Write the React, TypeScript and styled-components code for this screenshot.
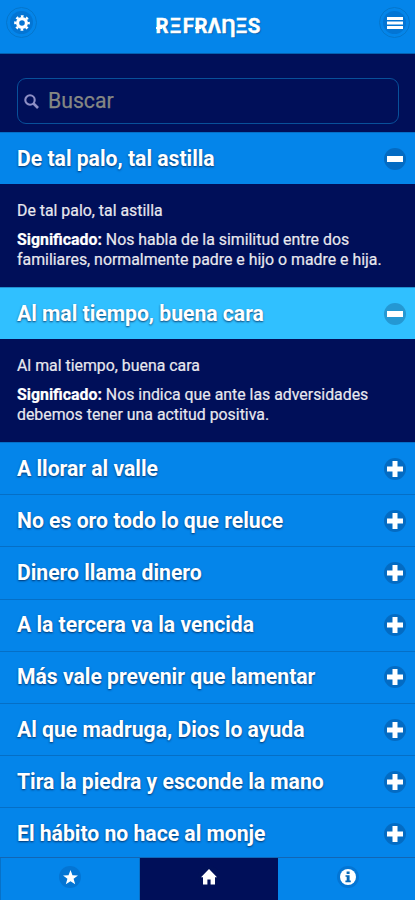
import React from 'react';
import styled, { createGlobalStyle } from 'styled-components';

const Global = createGlobalStyle`
  * { box-sizing: border-box; }
  body { margin: 0; background: #000f59; }
`;

const Screen = styled.div`
  width: 415px;
  height: 900px;
  overflow: hidden;
  display: flex;
  flex-direction: column;
  background: #000f59;
  color: #fff;
  font-family: Roboto, sans-serif;
`;

const Header = styled.header`
  flex: none;
  height: 54px;
  display: flex;
  align-items: flex-start;
  justify-content: space-between;
  padding: 7px 5px 0 6px;
  background: #0485ea;
  border-bottom: 1px solid #0560b0;
`;

const RoundButton = styled.button`
  width: 31px;
  height: 31px;
  padding: 0;
  display: flex;
  align-items: center;
  justify-content: center;
  border: 1px solid #0576cc;
  border-radius: 50%;
  background: transparent;
`;

const Disc = styled.span<{ $size?: number; $strong?: boolean }>`
  flex: none;
  width: ${p => p.$size ?? 22}px;
  height: ${p => p.$size ?? 22}px;
  display: flex;
  align-items: center;
  justify-content: center;
  border-radius: 50%;
  background: ${p => (p.$strong ? 'rgba(0, 30, 80, 0.25)' : 'rgba(0, 30, 90, 0.15)')};
  svg { display: block; }
`;

const Wordmark = styled.h1`
  margin: 7px 0 0;
  display: flex;
  height: 24px;
  font: 700 20.5px/24px Roboto, sans-serif;
  -webkit-text-stroke: 0.4px #fff;
  text-shadow: 1px 1px 1px #075ca6;
`;

const Letter = styled.span<{ $w: number; $barred?: boolean }>`
  position: relative;
  width: ${p => p.$w}px;
  display: flex;
  justify-content: center;
  &::before {
    content: '';
    display: ${p => (p.$barred ? 'block' : 'none')};
    position: absolute;
    left: 0;
    top: 13px;
    width: 6px;
    height: 2px;
    background: #fff;
  }
`;

const SearchArea = styled.div`
  flex: none;
  height: 78px;
  padding: 24px 16px 0 17px;
`;

const SearchBox = styled.label`
  height: 46px;
  display: flex;
  align-items: center;
  gap: 9px;
  padding-left: 6px;
  border: 1px solid #08509a;
  border-radius: 9px;
`;

const SearchInput = styled.input`
  width: 300px;
  padding: 0 0 1px;
  border: 0;
  outline: 0;
  background: transparent;
  color: #fff;
  font: 400 21.2px/30px Roboto, sans-serif;
  &::placeholder { color: #858783; opacity: 1; -webkit-text-stroke: 0.25px #858783; }
`;

const List = styled.main`
  flex: 1;
  min-height: 0;
  overflow: hidden;
`;

const RowHeader = styled.h2<{ $active?: boolean }>`
  height: 52.2px;
  margin: 0;
  display: flex;
  align-items: center;
  justify-content: space-between;
  padding: 0 9px 0 17px;
  background: ${p => (p.$active ? '#30c0ff' : '#0485ea')};
  border-top: 1px solid ${p => (p.$active ? '#218fd0' : '#056fc6')};
  font-size: 21.15px;
  font-weight: 700;
  line-height: 28px;
  white-space: nowrap;
  text-shadow: 0 1px 2px rgba(0, 25, 70, 0.75);
`;

const Panel = styled.section`
  height: 102.8px;
  padding: 17px 17px 0;
  font-size: 15.87px;
  line-height: 20.5px;
  white-space: nowrap;
  color: #e8e8ee;
  -webkit-text-stroke: 0.2px currentColor;
  p { margin: 0 0 8px; }
  b { color: #fff; }
`;

const Footer = styled.nav`
  flex: none;
  height: 43px;
  display: grid;
  grid-template-columns: 139px 139px 137px;
  border-top: 1px solid #1266b4;
`;

const Tab = styled.button<{ $active?: boolean; $shift?: number }>`
  display: flex;
  align-items: flex-start;
  justify-content: center;
  padding: 8px 0 0 0;
  text-indent: 0;
  border: 0;
  border-left: 1px solid #0871c7;
  background: ${p => (p.$active ? '#000f59' : '#0485ea')};
  &:last-child { padding-left: 3px; border-left: 0; }
`;

const Gear = () => (
  <svg width="16" height="16" viewBox="0 0 16 16">
    <circle cx="8" cy="8" r="4.4" fill="none" stroke="#fff" strokeWidth="3.2" />
    <circle cx="8" cy="8" r="6.7" fill="none" stroke="#fff" strokeWidth="2.3" strokeDasharray="2.65 2.612" strokeDashoffset="1.325" />
  </svg>
);

const Menu = () => (
  <svg width="16" height="14" viewBox="0 0 16 14" fill="#fff">
    <path d="M0 1h16v3H0zM0 5.5h16v3H0zM0 10h16v3H0z" />
  </svg>
);

const Magnifier = () => (
  <svg width="15" height="15" viewBox="0 0 15 15" fill="none" stroke="#8e8fc5" strokeWidth="2.1">
    <circle cx="6" cy="6" r="4.7" />
    <path d="M9.5 9.5 14 14" strokeWidth="2.6" />
  </svg>
);

const Minus = () => (
  <svg width="16" height="6" viewBox="0 0 16 6"><path d="M0 0h16v6H0z" fill="#fff" /></svg>
);

const Plus = () => (
  <svg width="16" height="16" viewBox="0 0 16 16">
    <path d="M5.5 0h5v5.5H16v5h-5.5V16h-5v-5.5H0v-5h5.5z" fill="#fff" />
  </svg>
);

const Star = () => (
  <svg width="15" height="15" viewBox="0 0 16 16">
    <path d="m8 0 2.1 5.6 5.9.2-4.7 3.6 1.7 5.8L8 11.9l-5 3.3 1.7-5.8L0 5.8l5.9-.2z" fill="#fff" />
  </svg>
);

const House = () => (
  <svg width="16" height="16" viewBox="0 0 16 16">
    <path d="M8 0 0 8.3h2V15.5h4.4v-5h3.2v5H14V8.3h2z" fill="#fff" />
  </svg>
);

const Info = () => (
  <svg width="16" height="16" viewBox="0 0 16 16">
    <circle cx="8" cy="8" r="8" fill="#fff" />
    <path d="M6.6 2.5h3v2.4h-3zM5.5 6.2h4.1v5.4h1.2v1.6H5.4v-1.6h1.3V7.8H5.5z" fill="#0668b8" />
  </svg>
);

type Proverb = { title: string; active?: boolean; meaning?: [string, string] };

const proverbs: Proverb[] = [
  { title: 'De tal palo, tal astilla', meaning: ['Nos habla de la similitud entre dos', 'familiares, normalmente padre e hijo o madre e hija.'] },
  { title: 'Al mal tiempo, buena cara', active: true, meaning: ['Nos indica que ante las adversidades', 'debemos tener una actitud positiva.'] },
  { title: 'A llorar al valle' },
  { title: 'No es oro todo lo que reluce' },
  { title: 'Dinero llama dinero' },
  { title: 'A la tercera va la vencida' },
  { title: 'Más vale prevenir que lamentar' },
  { title: 'Al que madruga, Dios lo ayuda' },
  { title: 'Tira la piedra y esconde la mano' },
  { title: 'El hábito no hace al monje' },
];

export default function App() {
  return (
    <Screen>
      <Global />
      <Header>
        <RoundButton aria-label="Ajustes"><Disc $size={23}><Gear /></Disc></RoundButton>
        <Wordmark aria-label="REFRANES">
          <Letter $w={13} $barred>R</Letter>
          <Letter $w={14}>Ξ</Letter>
          <Letter $w={12}>F</Letter>
          <Letter $w={13} $barred>R</Letter>
          <Letter $w={14}>Λ</Letter>
          <Letter $w={14}>Ƞ</Letter>
          <Letter $w={12}>Ξ</Letter>
          <Letter $w={13}>S</Letter>
        </Wordmark>
        <RoundButton aria-label="Menú"><Disc $size={23}><Menu /></Disc></RoundButton>
      </Header>
      <SearchArea>
        <SearchBox><Magnifier /><SearchInput placeholder="Buscar" /></SearchBox>
      </SearchArea>
      <List>
        {proverbs.map(p => (
          <article key={p.title}>
            <RowHeader $active={p.active}>
              <span>{p.title}</span>
              <Disc $strong>{p.meaning ? <Minus /> : <Plus />}</Disc>
            </RowHeader>
            {p.meaning && (
              <Panel>
                <p>{p.title}</p>
                <p><b>Significado:</b> {p.meaning[0]}<br />{p.meaning[1]}</p>
              </Panel>
            )}
          </article>
        ))}
      </List>
      <Footer>
        <Tab aria-label="Favoritos"><Disc><Star /></Disc></Tab>
        <Tab $active aria-label="Inicio"><Disc><House /></Disc></Tab>
        <Tab aria-label="Información"><Disc><Info /></Disc></Tab>
      </Footer>
    </Screen>
  );
}
